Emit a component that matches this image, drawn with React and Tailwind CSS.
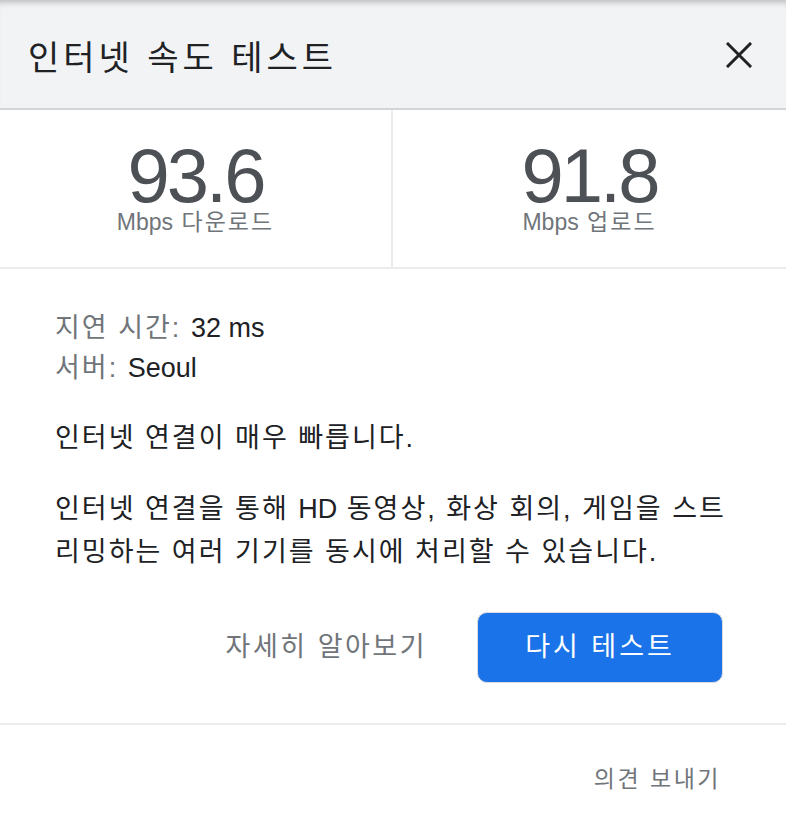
import React from 'react';

const font = { fontFamily: '"Liberation Sans", "Noto Sans CJK KR", sans-serif' };

const Stat = ({ value, label, border }) => (
  <div className={`flex flex-col items-center pt-[34px] ${border ? 'border-r-2 border-[#ebebeb]' : ''}`}>
    <div className="text-[76px] leading-[64px] tracking-[-3px] text-[#4d5156]">{value}</div>
    <div className="text-[23px] leading-[28px] tracking-[2px] text-[#70757a]">
      <span className="tracking-normal">Mbps</span> {label}
    </div>
  </div>
);

const App = () => {
  return (
    <div className="w-[786px] h-[814px] bg-white" style={font}>
      {/* header */}
      <div className="h-[110px] bg-[#f1f3f4] flex items-center justify-between pl-[28px] pr-[34px] border-b-2 border-[#d4d4d4] shadow-[inset_0_7px_6px_-5px_rgba(0,0,0,0.25)]">
        <h1 className="text-[34px] leading-[40px] tracking-[4px] text-[#202124] pt-[8px]">인터넷 속도 테스트</h1>
        <svg width="26" height="26" viewBox="0 0 26 26" className="mt-[2px]">
          <path d="M2 2 L24 24 M24 2 L2 24" stroke="#202124" strokeWidth="3" strokeLinecap="square" />
        </svg>
      </div>

      {/* stats */}
      <div className="grid grid-cols-2 h-[159px] border-b-2 border-[#ebebeb]">
        <Stat value="93.6" label="다운로드" border />
        <Stat value="91.8" label="업로드" />
      </div>

      {/* details */}
      <div className="px-[55px] pt-[39px] text-[27px] tracking-[2px] text-[#202124]">
        <div className="leading-[40px]">
          <span className="text-[#70757a]">지연 시간:</span> <span className="tracking-normal">32 ms</span>
        </div>
        <div className="leading-[40px]">
          <span className="text-[#70757a]">서버:</span> <span className="tracking-normal">Seoul</span>
        </div>
        <p className="mt-[30px] leading-[40px]">인터넷 연결이 매우 빠릅니다.</p>
        <p className="mt-[30px] leading-[43px]">
          인터넷 연결을 통해 <span className="tracking-normal">HD</span> 동영상, 화상 회의, 게임을 스트리밍하는 여러 기기를 동시에 처리할 수 있습니다.
        </p>
        <div className="mt-[38px] flex items-center justify-end gap-[50px] pr-[8px]">
          <button className="text-[27px] tracking-[2.5px] text-[#70757a]">자세히 알아보기</button>
          <button className="w-[246px] h-[71px] rounded-[10px] bg-[#1a73e8] border border-[#dadce0] text-white text-[27px] tracking-[3px]">
            다시 테스트
          </button>
        </div>
      </div>

      <div className="mt-[40px] border-t-2 border-[#ebebeb] flex justify-end pr-[65px] pt-[34px]">
        <span className="text-[23px] leading-[40px] tracking-[2.5px] text-[#70757a]">의견 보내기</span>
      </div>
    </div>
  );
};

export default App;
